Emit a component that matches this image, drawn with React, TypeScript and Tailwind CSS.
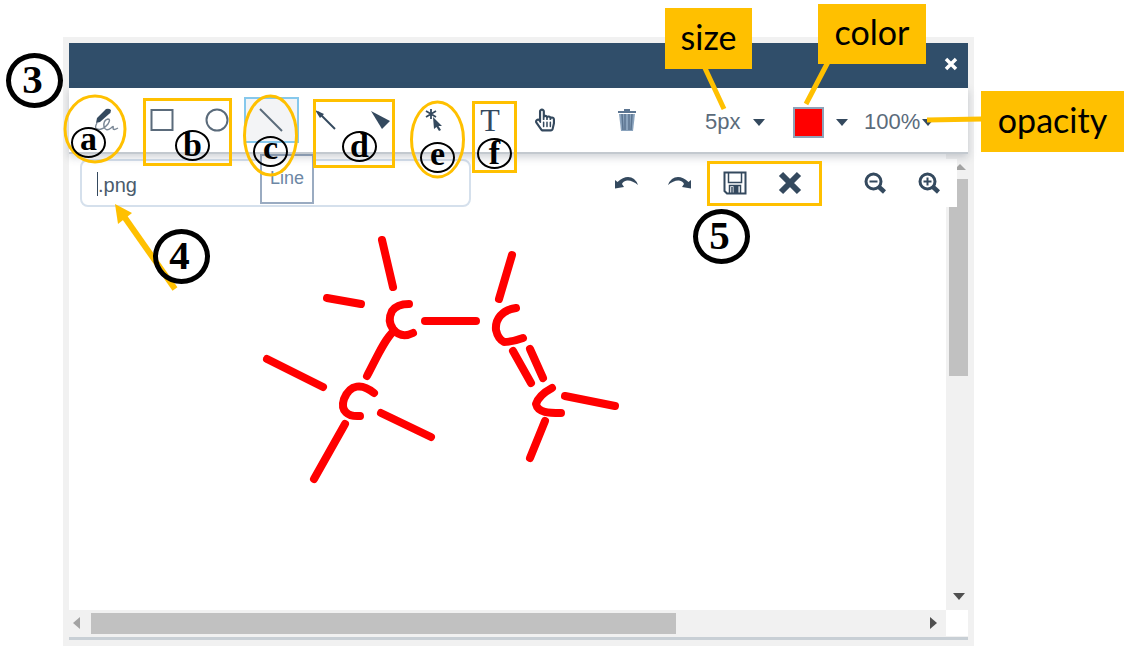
import type { ReactNode } from 'react'
import { FaRegHandPointer } from 'react-icons/fa'

interface ToolProps {
    label: string
    active?: boolean
    children: ReactNode
}

const ToolButton = ({ label, active, children }: ToolProps) => {
    return (
        <button
            type="button"
            aria-label={label}
            className={
                active
                    ? 'flex h-[46px] items-center justify-center border-2 border-[#86c8ec] bg-[#f3f4f6]'
                    : 'flex h-[46px] items-center justify-center border-2 border-transparent'
            }
        >
            {children}
        </button>
    )
}

const Caret = ({ className }: { className?: string }) => (
    <svg viewBox="0 0 12 7" className={`h-[7px] w-3 fill-[#34495e] ${className || ''}`}>
        <path d="M0 0H12L6 7Z" />
    </svg>
)

const PenIcon = () => (
    <svg viewBox="0 0 30 30" className="h-[30px] w-[30px]" fill="none">
        <path d="M4 18L5 13L14 4Q17 3 19 5Q19 8 17 9L8 17Z" fill="#34495e" />
        <path d="M5 18Q2 23 5 24Q10 26 16 19Q19 14 16 14Q11 15 12 22Q14 27 19 23Q22 20 21 23Q21 26 26 23" stroke="#7b8896" strokeWidth="1.4" />
    </svg>
)

const SelectIcon = () => (
    <svg viewBox="0 0 24 24" className="h-6 w-6">
        <path d="M8 1V11M3 3L13 9M13 3L3 9" stroke="#34495e" strokeWidth="1.8" />
        <path d="M10 9L19 18H15.500L18 22L16 23L13.500 19L11 21Z" fill="#34495e" />
    </svg>
)

const TrashIcon = () => (
    <svg viewBox="0 0 18 22" className="h-[22px] w-[18px]">
        <path d="M6 2V0H12V2H18V4H0V2Z" fill="#5c7591" />
        <path d="M1 5H17L15 22H3Z" fill="#8aa3bd" />
        <path d="M4 5L5 21M7 5V21M11 5V21M14 5L13 21" stroke="#5c7591" strokeWidth="1.5" />
    </svg>
)

const UndoIcon = ({ className }: { className?: string }) => (
    <svg viewBox="0 0 24 14" className={`h-[14px] w-6 ${className || ''}`}>
        <path d="M1 4L3.500 6Q9 1 14 1Q21 1 24 9Q18 4 13 4.500Q9 5 8 8L10 11L1 12.500Z" fill="#34495e" />
    </svg>
)

const SaveIcon = () => (
    <svg viewBox="0 0 24 24" className="h-6 w-6" fill="none" stroke="#34495e">
        <path d="M1.500 1.500H22.500V22.500H4L1.500 20Z" strokeWidth="2" />
        <path d="M5.500 2V11.500H18.500V2M6.500 22V14.500H17.500V22" strokeWidth="1.5" />
        <path d="M9 16V22" strokeWidth="1.5" />
        <path d="M13 15V22" strokeWidth="5" />
    </svg>
)

const CloseIcon = () => (
    <svg viewBox="0 0 24 24" className="h-6 w-6">
        <path d="M3 3L21 21M21 3L3 21" stroke="#34495e" strokeWidth="6" />
    </svg>
)

const ZoomIcon = ({ plus }: { plus?: boolean }) => (
    <svg viewBox="0 0 22 22" className="h-[22px] w-[22px]" fill="none" stroke="#34495e">
        <circle cx="9.500" cy="9.500" r="7.500" strokeWidth="3" />
        <path d="M14.500 14.500L20.500 20" strokeWidth="4.500" />
        <path d={plus ? 'M5.500 9.500H13.500M9.500 5.500V13.500' : 'M5.500 9.500H13.500'} strokeWidth="2" />
    </svg>
)

const Toolbar = () => {
    return (
        <div className="relative z-10 flex h-[66px] items-center border-b-2 border-[#c3c9cf] bg-white pl-[11px] shadow-[0_3px_8px_rgba(60,70,90,0.25)]">
            <div className="grid w-[492px] grid-cols-9">
                <ToolButton label="Pen"><PenIcon /></ToolButton>
                <ToolButton label="Rectangle">
                    <svg viewBox="0 0 24 24" className="h-6 w-6"><path d="M1.500 2H22.500V22H1.500Z" fill="none" stroke="#5b6b7b" strokeWidth="2" /></svg>
                </ToolButton>
                <ToolButton label="Ellipse">
                    <svg viewBox="0 0 24 24" className="h-6 w-6"><circle cx="12" cy="12" r="10.500" fill="none" stroke="#5b6b7b" strokeWidth="2" /></svg>
                </ToolButton>
                <ToolButton label="Line" active>
                    <svg viewBox="0 0 24 24" className="h-6 w-6"><path d="M1 1L23 23" stroke="#5b6b7b" strokeWidth="2" /></svg>
                </ToolButton>
                <ToolButton label="Arrow">
                    <svg viewBox="0 0 22 22" className="h-[22px] w-[22px]"><path d="M3 3L20 20" stroke="#34495e" strokeWidth="2" /><path d="M0 1L9 5L5 9Z" fill="#34495e" /></svg>
                </ToolButton>
                <ToolButton label="Wedge">
                    <svg viewBox="0 0 20 20" className="h-5 w-5"><path d="M0 1L19 11L11 19Z" fill="#34495e" /></svg>
                </ToolButton>
                <ToolButton label="Select"><SelectIcon /></ToolButton>
                <ToolButton label="Text">
                    <span className="font-['Liberation_Serif',serif] text-[32px] leading-6 text-[#34495e]">T</span>
                </ToolButton>
                <ToolButton label="Pan"><FaRegHandPointer className="h-6 w-5 text-[#34495e]" /></ToolButton>
            </div>
            <button type="button" aria-label="Delete" className="ml-7 flex w-[54px] justify-center">
                <TrashIcon />
            </button>
            <div className="relative ml-[51px] flex items-center pt-1">
                <select aria-label="size" className="w-[60px] appearance-none bg-transparent text-[22px] leading-7 text-[#5b6b7b]">
                    <option>5px</option>
                </select>
                <Caret className="pointer-events-none absolute right-0" />
            </div>
            <button type="button" aria-label="color" className="ml-7 flex items-center gap-3 pt-1">
                <span className="h-[31px] w-[31px] border-2 border-[#8ea2b8] bg-[#ff0000]" />
                <Caret />
            </button>
            <div className="relative ml-4 flex items-center pt-1">
                <select aria-label="opacity" className="w-[70px] appearance-none bg-transparent text-[22px] leading-7 text-[#5b6b7b]">
                    <option>100%</option>
                </select>
                <Caret className="pointer-events-none absolute right-0" />
            </div>
        </div>
    )
}

const FileBar = () => {
    return (
        <div className="absolute top-[5px] right-[11px] left-[11px] flex h-12 items-center justify-between">
            <div className="relative">
                <input
                    aria-label="File name"
                    defaultValue=".png"
                    className="h-12 w-[391px] rounded-lg border-2 border-[#d5e0ec] bg-white pt-1 pl-4 text-xl text-[#4b5b6c]"
                />
                <span className="absolute top-[13px] left-[17px] h-6 w-px bg-[#34495e]" />
            </div>
            <div className="flex h-12 items-center bg-white pr-[17px]">
                <button type="button" aria-label="Undo" className="flex w-[54px] justify-center"><UndoIcon /></button>
                <button type="button" aria-label="Redo" className="flex w-[54px] justify-center"><UndoIcon className="-scale-x-100" /></button>
                <button type="button" aria-label="Save" className="flex w-[55px] justify-center"><SaveIcon /></button>
                <button type="button" aria-label="Cancel" className="flex w-[55px] justify-center"><CloseIcon /></button>
                <button type="button" aria-label="Zoom out" className="ml-[47px] flex w-[22px]"><ZoomIcon /></button>
                <button type="button" aria-label="Zoom in" className="ml-8 flex w-[22px]"><ZoomIcon plus /></button>
            </div>
        </div>
    )
}

const Drawing = () => {
    return (
        <svg viewBox="0 0 877 456" preserveAspectRatio="xMinYMin meet" className="block h-[456px] min-w-0 flex-1">
            <g transform="translate(-69 -154)" fill="none" stroke="#ff0000" strokeWidth="8" strokeLinecap="round" strokeLinejoin="round">
                <path d="M382 240L393 287" />
                <path d="M327 298L361 304" />
                <path d="M409 304Q397 304 392 311Q387 321 393 329Q401 339 413 333" />
                <path d="M393 332C385 339 378 355 367 376" />
                <path d="M425 321H476" />
                <path d="M512 255L499 299" />
                <path d="M516 308C502 310 495 319 496 330Q498 339 504 342Q512 342 523 338" />
                <path d="M513 351L531 383" />
                <path d="M530 349L543 378" />
                <path d="M552 388Q539 395 536 404C538 413 549 413 561 413" />
                <path d="M565 396L615 406" />
                <path d="M545 421L530 458" />
                <path d="M374 393C362 383 350 384 344 399C340 411 348 417 360 416" />
                <path d="M267 359L323 387" />
                <path d="M381 413L431 437" />
                <path d="M345 424L314 479" />
            </g>
        </svg>
    )
}

const VerticalScrollbar = () => (
    <div className="flex w-[22px] flex-col items-end bg-[#f1f1f1]">
        <svg viewBox="0 0 12 6" className="mt-[10px] mr-[2px] h-[6px] w-3 fill-[#a3a3a3]"><path d="M6 0L12 6H0Z" /></svg>
        <div className="mt-[9px] h-[197px] w-[19px] bg-[#c1c1c1]" />
        <svg viewBox="0 0 12 7" className="mt-auto mr-[3px] mb-[10px] h-[7px] w-3 fill-[#505050]"><path d="M0 0H12L6 7Z" /></svg>
    </div>
)

const HorizontalScrollbar = () => (
    <div className="flex h-[27px] border-b border-[#f1f1f1] bg-white">
        <div className="flex flex-1 items-center bg-[#f1f1f1]">
            <svg viewBox="0 0 7 12" className="ml-1 h-3 w-[7px] fill-[#a3a3a3]"><path d="M7 0V12L0 6Z" /></svg>
            <div className="ml-[11px] h-[21px] w-2/3 bg-[#c1c1c1]" />
            <svg viewBox="0 0 7 12" className="mr-[9px] ml-auto h-3 w-[7px] fill-[#505050]"><path d="M0 0V12L7 6Z" /></svg>
        </div>
        <div className="w-[22px]" />
    </div>
)

const Marks = () => (
    <svg width="1131" height="646" viewBox="0 0 1131 646" className="absolute top-0 left-0" fill="none" stroke="#ffc000">
        <g strokeWidth="3">
            <ellipse cx="95" cy="129" rx="30" ry="33" />
            <path d="M144.500 99.500H230.500V164.500H144.500Z" />
            <ellipse cx="270.500" cy="135.500" rx="26" ry="39.500" />
            <path d="M314.500 100.500H393.500V166.500H314.500Z" />
            <ellipse cx="437.500" cy="139.500" rx="26" ry="37.500" />
            <path d="M473.500 102.500H515.500V171.500H473.500Z" />
            <path d="M708.500 162.500H820.500V204.500H708.500Z" />
        </g>
        <path d="M704 66L724 109M828 62L806 104M927 120L982 119" strokeWidth="5" />
        <path d="M175 289L123 215" strokeWidth="6" />
        <path d="M115 204L132 213L118 224Z" fill="#ffc000" stroke="none" />
    </svg>
)

const steps = [
    { text: '3', place: 'left-[6px] top-[53px]' },
    { text: '4', place: 'left-[153px] top-[229px]' },
    { text: '5', place: 'left-[693px] top-[209px]' },
]

const letters = [
    { text: 'a', place: 'left-[71px] top-[127px] pb-2' },
    { text: 'b', place: 'left-[175px] top-[130px] pb-0.5' },
    { text: 'c', place: 'left-[253px] top-[136px] pb-2' },
    { text: 'd', place: 'left-[342px] top-[131px] pb-0.5' },
    { text: 'e', place: 'left-[420px] top-[142px] pb-2' },
    { text: 'f', place: 'left-[477px] top-[138px] pb-0.5' },
]

const callouts = [
    { text: 'size', place: 'left-[665px] top-[8px] h-[61px] w-[87px]' },
    { text: 'color', place: 'left-[818px] top-[4px] h-[60px] w-[108px]' },
    { text: 'opacity', place: 'left-[981px] top-[91px] h-[61px] w-[143px]' },
]

const Annotations = () => {
    return (
        <div className="pointer-events-none absolute top-0 left-0 z-20">
            <Marks />
            {steps.map((step) => (
                <div
                    key={step.text}
                    className={`absolute flex h-[55px] w-[57px] items-center justify-center rounded-[50%] border-5 border-black pr-1 pb-0.5 font-['Liberation_Serif',serif] text-[41px] leading-none font-bold text-black ${step.place}`}
                >
                    {step.text}
                </div>
            ))}
            {letters.map((letter) => (
                <div
                    key={letter.text}
                    className={`absolute flex h-[31px] w-[35px] items-center justify-center rounded-[50%] border-2 border-black font-['Liberation_Serif',serif] text-[34px] leading-none font-bold text-black ${letter.place}`}
                >
                    {letter.text}
                </div>
            ))}
            {callouts.map((callout) => (
                <div
                    key={callout.text}
                    className={`absolute flex items-center justify-center bg-[#ffc000] pb-1 font-['Lato',sans-serif] text-[34px] leading-none text-black ${callout.place}`}
                >
                    {callout.text}
                </div>
            ))}
        </div>
    )
}

export default function App() {
    return (
        <div className="relative overflow-hidden bg-white pt-[37px] pr-[157px] pl-[63px] font-['Liberation_Sans',Arial,sans-serif]">
            <main className="border-6 border-[#f1f1f1]">
                <header className="flex h-[45px] items-center justify-end bg-[#304e6a] pr-[10px] pb-1">
                    <button type="button" aria-label="Close" className="flex">
                        <svg viewBox="0 0 14 14" className="h-[14px] w-[14px]"><path d="M2 2L12 12M12 2L2 12" stroke="#ffffff" strokeWidth="3.500" /></svg>
                    </button>
                </header>
                <Toolbar />
                <section className="relative flex bg-white">
                    <Drawing />
                    <VerticalScrollbar />
                    <FileBar />
                    {/* Tooltip of the active tool */}
                    <div role="tooltip" className="absolute top-0 left-[191px] h-[50px] w-[54px] border-2 border-[#9aabc1] bg-white pt-[10px] text-center text-lg leading-6 text-[#6d87a5]">
                        Line
                    </div>
                </section>
                <HorizontalScrollbar />
                <div className="h-[3px] bg-[#c8cfd5]" />
            </main>
            <Annotations />
        </div>
    )
}
